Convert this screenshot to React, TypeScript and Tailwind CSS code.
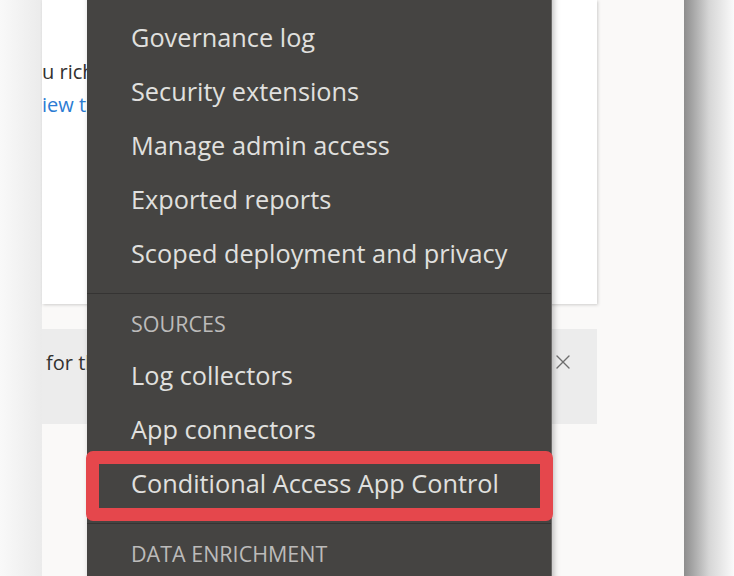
import { X } from 'lucide-react'

const topItems = ['User groups', 'Governance log', 'Security extensions', 'Manage admin access', 'Exported reports', 'Scoped deployment and privacy']

function Item({ label }: { label: string }) {
  return <div className="h-[54px] flex items-center pl-[44px] text-[25.3px] text-[#e0e0df] whitespace-nowrap">{label}</div>
}

function Header({ label }: { label: string }) {
  return <div className="h-[55px] pt-[5px] flex items-center pl-[44px] text-[21.5px] text-[#bcbbba] whitespace-nowrap">{label}</div>
}

export default function App() {
  return (
    <div className="relative w-[734px] h-[576px] overflow-hidden flex bg-[#faf9f8] font-['Open_Sans',sans-serif]">
      <div className="w-[42px] shrink-0 bg-gradient-to-r from-[#f9f9f9] to-[#ebebeb]" />

      <div className="w-[555px] shrink-0 flex flex-col">
        <div className="h-[304px] bg-white shadow-[1px_1px_3px_rgba(0,0,0,0.18)] overflow-hidden text-[20px] leading-[28px]">
          <div className="pt-[58px] text-[#323130] whitespace-nowrap">u rich insights into your cloud apps</div>
          <div className="pt-[5px] text-[#2b7cd3] whitespace-nowrap">iew the cloud discovery dashboard</div>
        </div>
        <div className="mt-[25px] h-[95px] bg-[#ececec] flex items-start pt-[20px] pl-[4px] pr-[22px] text-[20px] leading-[28px] text-[#323130]">
          <span className="flex-1 whitespace-nowrap overflow-hidden">for the best experience</span>
          <X size={24} strokeWidth={1.4} className="mt-[1px] text-[#6f6f6f]" />
        </div>
      </div>

      <div className="w-[87px] shrink-0" />
      <div className="flex-1 bg-gradient-to-r from-[#8d8d8d] via-[#d6d6d6] to-[#fafafa]" />

      <div className="absolute left-[87px] top-[-43px] w-[465px] bg-[#454442] border-r border-[#6a6968] shadow-[2px_0_6px_rgba(0,0,0,0.25)] pb-[40px]">
        {topItems.map((t) => <Item key={t} label={t} />)}
        <div className="mt-[12px] h-px bg-[#353433]" />
        <Header label="SOURCES" />
        <Item label="Log collectors" />
        <Item label="App connectors" />
        <div className="relative">
          <Item label="Conditional Access App Control" />
          <div className="absolute left-[-1px] right-[-2px] top-[-6px] bottom-[-10px] border-[13px] border-[#e5474c] rounded-[7px]" />
        </div>
        <div className="mt-[12px] h-px bg-[#353433]" />
        <Header label="DATA ENRICHMENT" />
      </div>
    </div>
  )
}
